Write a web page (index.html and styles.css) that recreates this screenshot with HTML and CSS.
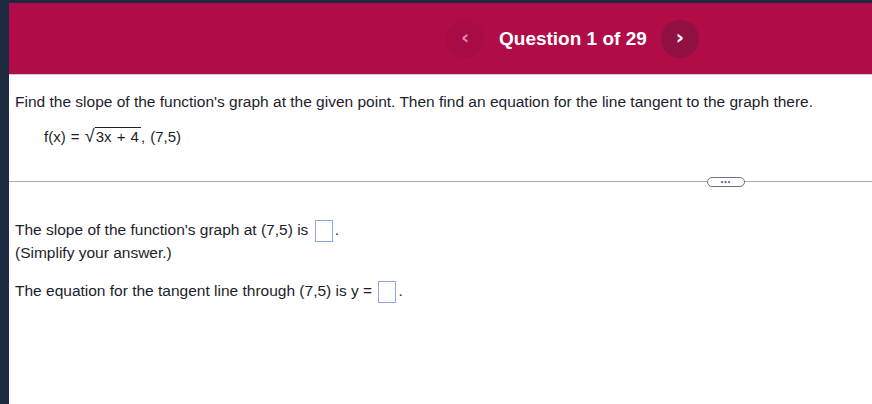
FILE: index.html
```html
<!DOCTYPE html>
<html lang="en">
<head>
    <meta charset="UTF-8">
    <title>Question 1 of 29</title>
    <link rel="stylesheet" href="styles.css">
</head>
<body>
    <div class="frame">
        <div class="topbar">
            <button class="nav-btn prev">&#8249;</button>
            <h1>Question 1 of 29</h1>
            <button class="nav-btn next">&#8250;</button>
        </div>

        <div class="question">
            <p class="prompt">Find the slope of the function's graph at the given point. Then find an equation for the line tangent to the graph there.</p>
            <p class="formula">f(x) = <span class="radical"><span class="root-sign">&#8730;</span><span class="radicand">3x + 4</span></span>, (7,5)</p>
        </div>

        <div class="divider">
            <span class="more">&bull;&bull;&bull;</span>
        </div>

        <div class="answers">
            <p>The slope of the function's graph at (7,5) is <span class="blank"></span>.</p>
            <p class="hint">(Simplify your answer.)</p>
            <p class="second">The equation for the tangent line through (7,5) is y = <span class="blank"></span>.</p>
        </div>
    </div>
</body>
</html>
```

FILE: styles.css
```css
body {
    margin: 0;
    background-color: #1b2a41;
    font-family: 'Liberation Sans', Arial, sans-serif;
    color: #1d1d2b;
}

.frame {
    margin: 3px 0 0 9px;
    height: 401px;
    background-color: white;
    overflow: hidden;
}

.topbar {
    height: 72px;
    background-color: #b00c48;
    border-bottom: 1px solid #d6c4d0;
    display: flex;
    align-items: center;
    padding-left: 437px;
    box-sizing: border-box;
}

.topbar h1 {
    margin: 0 14px 0 15px;
    font-size: 19px;
    color: white;
    font-weight: bold;
}

.nav-btn {
    width: 38px;
    height: 38px;
    border-radius: 50%;
    border: none;
    padding: 0 0 3px 0;
    font-family: 'DejaVu Sans', sans-serif;
    font-size: 20px;
    font-weight: bold;
    line-height: 1;
}

.nav-btn.prev {
    background-color: #a90b45;
    color: #d98aa6;
}

.nav-btn.next {
    background-color: #8f1041;
    color: white;
}

.question {
    padding: 18px 0 0 6px;
    height: 106px;
    box-sizing: border-box;
}

.question p {
    margin: 0;
}

.prompt {
    font-size: 15.5px;
}

.formula {
    font-size: 15px;
    padding: 16px 0 0 29px;
    word-spacing: 1px;
}

.radical {
    display: inline-block;
}

.root-sign {
    font-size: 18px;
    line-height: 1;
}

.radicand {
    border-top: 1px solid #1d1d2b;
    padding: 0 2px 0 1px;
}

.divider {
    border-top: 1px solid #a4acba;
    height: 0;
    position: relative;
}

.more {
    position: absolute;
    left: 698px;
    top: -5px;
    width: 36px;
    height: 8px;
    border: 1px solid #6b7487;
    border-radius: 5px;
    background-color: white;
    color: #4a5266;
    font-size: 7px;
    line-height: 8px;
    text-align: center;
    letter-spacing: 1px;
}

.answers {
    padding: 37px 0 0 6px;
    font-size: 15.5px;
}

.answers p {
    margin: 0;
    line-height: 22px;
}

.answers .second {
    margin-top: 16px;
}

.blank {
    display: inline-block;
    width: 16px;
    height: 20px;
    border: 1px solid #8ea8e0;
    vertical-align: middle;
    margin: 0 2px;
}
```
